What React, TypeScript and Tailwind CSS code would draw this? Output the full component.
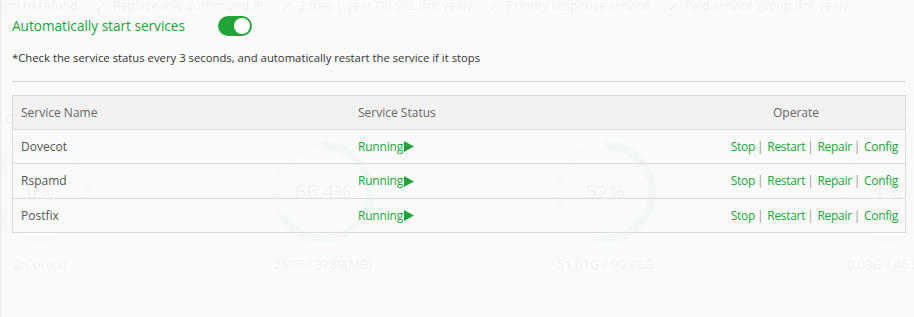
import React from "react"

const features = [
  "Replaceable authorized IP",
  "2 free 1-year DV SSL (for year)",
  "Priority response service",
  "Paid service group (for year)",
]

const gauges = [
  { title: "CPU usage", value: "0%", detail: "2 Core(s)", pct: 0 },
  { title: "RAM usage", value: "66.4%", detail: "2517 / 3789(MB)", pct: 66.4 },
  { title: "/", value: "52%", detail: "51.61G / 99.98G", pct: 52 },
  { title: "/home", value: "1%", detail: "0.03G / 46.5G", pct: 1 },
]

const services = ["Dovecot", "Rspamd", "Postfix"]
const rowHeights = ["h-[34px]", "h-[35px]", "h-[33px]"]
const actions = ["Stop", "Restart", "Repair", "Config"]

const Gauge: React.FC<{ pct: number; value: string }> = ({ pct, value }) => {
  const r = 47
  const c = 2 * Math.PI * r
  return (
    <div className="relative w-[104px] h-[104px]">
      <svg width="104" height="104" viewBox="0 0 104 104">
        <circle cx="52" cy="52" r={r} fill="none" stroke="#cfe9d4" strokeWidth="8" />
        <circle
          cx="52"
          cy="52"
          r={r}
          fill="none"
          stroke="#20a53a"
          strokeWidth="8"
          strokeDasharray={`${(c * pct) / 100} ${c}`}
          transform="rotate(-90 52 52)"
          opacity="0.4"
        />
      </svg>
      <div className="absolute inset-0 flex items-center justify-center text-[20px] text-[#666]">{value}</div>
    </div>
  )
}

const App: React.FC = () => {
  return (
    <div
      className="relative w-[914px] h-[317px] overflow-hidden bg-white"
      style={{ fontFamily: '"Open Sans", "Noto Sans", sans-serif' }}
    >
      {/* page behind the dialog */}
      <div className="flex items-center gap-[17px] -mt-[6px] -ml-[18px] h-[24px] text-[12.5px] text-[#666] whitespace-nowrap">
        <span>option to refund</span>
        {features.map((f) => (
          <span key={f} className="flex items-center gap-[6px]">
            <span className="text-[14px]">✓</span>
            {f}
          </span>
        ))}
      </div>
      <div className="grid grid-cols-4 -ml-[101px] w-[1130px] mt-[91px]">
        {gauges.map((g) => (
          <div key={g.title} className="flex flex-col items-center text-[#666]">
            <div className="text-[14px] h-[20px] leading-[20px]">{g.title}</div>
            <div className="mt-[11px]">
              <Gauge pct={g.pct} value={g.value} />
            </div>
            <div className="mt-[11px] text-[13px] leading-[18px]">{g.detail}</div>
          </div>
        ))}
      </div>

      {/* service dialog */}
      <div className="absolute inset-0 bg-[#fafafa]/[0.95] border-l-2 border-[#f0f0f0] pl-[10px] pr-[8px]">
        <div className="flex items-center h-[20px] mt-[16px]">
          <span className="w-[206px] text-[13.6px] text-[#20a53a]">Automatically start services</span>
          <button className="relative w-[34px] h-[20px] rounded-full bg-[#20a53a]">
            <span className="absolute right-[2px] top-[2px] w-[16px] h-[16px] rounded-full bg-white" />
          </button>
        </div>
        <p className="mt-[13px] h-[18px] leading-[18px] text-[11.3px] text-[#333]">
          *Check the service status every 3 seconds, and automatically restart the service if it stops
        </p>
        <div className="mt-[14px] border-t border-[#d4d4d4]" />

        <div className="mt-[13px] border border-[#dddddd] text-[12px]">
          <div className="grid grid-cols-[336px_338px_1fr] h-[34px] items-center bg-[#f2f2f2] text-[#666] border-b border-[#dddddd]">
            <div className="pl-[8px]">Service Name</div>
            <div className="pl-[9px]">Service Status</div>
            <div className="text-center">Operate</div>
          </div>
          {services.map((s, i) => (
            <div
              key={s}
              className={`grid grid-cols-[336px_338px_1fr] items-center ${
                i < services.length - 1 ? "border-b border-[#dddddd]" : ""
              } ${rowHeights[i]}`}
            >
              <div className="pl-[8px] text-[#555]">{s}</div>
              <div className="pl-[9px] flex items-center text-[#20a53a] tracking-[-0.2px]">
                Running
                <svg width="10" height="11" viewBox="0 0 10 11" className="ml-[1px]">
                  <path d="M0 0 L10 5.5 L0 11 Z" fill="#20a53a" />
                </svg>
              </div>
              <div className="flex justify-end pr-[7px] tracking-[-0.3px] text-[#20a53a]">
                {actions.map((a, j) => (
                  <span key={a} className="flex items-center">
                    <a className="cursor-pointer">{a}</a>
                    {j < actions.length - 1 && <span className="text-[#999] ml-[2px] mr-[4px]">|</span>}
                  </span>
                ))}
              </div>
            </div>
          ))}
        </div>
      </div>
    </div>
  )
}

export default App
